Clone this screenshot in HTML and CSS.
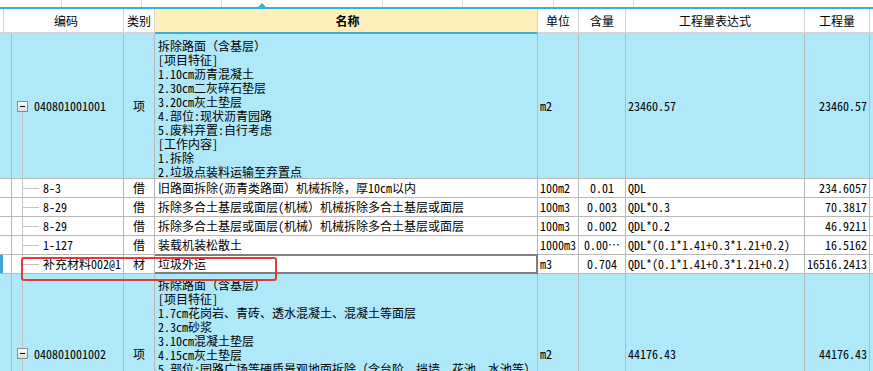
FILE: index.html
```html
<!DOCTYPE html>
<html lang="zh">
<head>
<meta charset="utf-8">
<link rel="stylesheet" href="styles.css">
</head>
<body>
<div class="strip">
  <span class="tick t1"></span><span class="tick t2"></span><span class="tick t3"></span>
  <span class="tick t4"></span><span class="tick t5"></span><span class="tick t6"></span><span class="tick t7"></span>
  <span class="caret"></span>
</div>
<div class="grid">
  <div class="row head">
    <div class="c h code">编码</div>
    <div class="c h">类别</div>
    <div class="c h name">名称</div>
    <div class="c h">单位</div>
    <div class="c h">含量</div>
    <div class="c h">工程量表达式</div>
    <div class="c h">工程量</div>
    <div class="c h end"></div>
  </div>

  <div class="row blue r1">
    <div class="c ind"></div>
    <div class="c code tree-down"><span class="box"></span><span class="ctext">040801001001</span></div>
    <div class="c cat">项</div>
    <div class="c name multi">拆除路面（含基层）<br>[项目特征]<br>1.10cm沥青混凝土<br>2.30cm二灰碎石垫层<br>3.20cm灰土垫层<br>4.部位:现状沥青园路<br>5.废料弃置:自行考虑<br>[工作内容]<br>1.拆除<br>2.垃圾点装料运输至弃置点</div>
    <div class="c unit">m2</div>
    <div class="c qty"></div>
    <div class="c expr">23460.57</div>
    <div class="c amt">23460.57</div>
    <div class="c end"></div>
  </div>

  <div class="row child">
    <div class="c ind"></div>
    <div class="c code tree-line"><span class="branch"></span><span class="ctext">8-3</span></div>
    <div class="c cat">借</div>
    <div class="c name">旧路面拆除(沥青类路面）机械拆除，厚10cm以内</div>
    <div class="c unit">100m2</div>
    <div class="c qty">0.01</div>
    <div class="c expr">QDL</div>
    <div class="c amt">234.6057</div>
    <div class="c end"></div>
  </div>

  <div class="row child">
    <div class="c ind"></div>
    <div class="c code tree-line"><span class="branch"></span><span class="ctext">8-29</span></div>
    <div class="c cat">借</div>
    <div class="c name">拆除多合土基层或面层(机械）机械拆除多合土基层或面层</div>
    <div class="c unit">100m3</div>
    <div class="c qty">0.003</div>
    <div class="c expr">QDL*0.3</div>
    <div class="c amt">70.3817</div>
    <div class="c end"></div>
  </div>

  <div class="row child">
    <div class="c ind"></div>
    <div class="c code tree-line"><span class="branch"></span><span class="ctext">8-29</span></div>
    <div class="c cat">借</div>
    <div class="c name">拆除多合土基层或面层(机械）机械拆除多合土基层或面层</div>
    <div class="c unit">100m3</div>
    <div class="c qty">0.002</div>
    <div class="c expr">QDL*0.2</div>
    <div class="c amt">46.9211</div>
    <div class="c end"></div>
  </div>

  <div class="row child">
    <div class="c ind"></div>
    <div class="c code tree-line"><span class="branch"></span><span class="ctext">1-127</span></div>
    <div class="c cat">借</div>
    <div class="c name">装载机装松散土</div>
    <div class="c unit">1000m3</div>
    <div class="c qty">0.00⋯</div>
    <div class="c expr">QDL*(0.1*1.41+0.3*1.21+0.2)</div>
    <div class="c amt">16.5162</div>
    <div class="c end"></div>
  </div>

  <div class="row child sel">
    <div class="c ind mark"></div>
    <div class="c code tree-line"><span class="branch"></span><span class="ctext">补充材料002@1</span></div>
    <div class="c cat">材</div>
    <div class="c name editing">垃圾外运</div>
    <div class="c unit">m3</div>
    <div class="c qty">0.704</div>
    <div class="c expr">QDL*(0.1*1.41+0.3*1.21+0.2)</div>
    <div class="c amt">16516.2413</div>
    <div class="c end"></div>
    <div class="redbox"></div>
  </div>

  <div class="row blue r2">
    <div class="c ind"></div>
    <div class="c code tree-r2"><span class="box"></span><span class="ctext">040801001002</span></div>
    <div class="c cat">项</div>
    <div class="c name multi">拆除路面（含基层）<br>[项目特征]<br>1.7cm花岗岩、青砖、透水混凝土、混凝土等面层<br>2.3cm砂浆<br>3.10cm混凝土垫层<br>4.15cm灰土垫层<br>5.部位:园路广场等硬质景观地面拆除（含台阶、挡墙、花池、水池等）<br>[工作内容]<br>1.拆除<br>2.垃圾点装料运输至弃置点<br>&nbsp;</div>
    <div class="c unit">m2</div>
    <div class="c qty"></div>
    <div class="c expr">44176.43</div>
    <div class="c amt">44176.43</div>
    <div class="c end"></div>
  </div>
</div>
</body>
</html>
```

FILE: styles.css
```css
* { box-sizing: border-box; }
html, body {
  margin: 0;
  padding: 0;
  width: 873px;
  height: 371px;
  overflow: hidden;
  background: #ffffff;
}
body {
  font-family: "Noto Sans Mono CJK SC", "Noto Sans CJK SC", "Liberation Mono", monospace;
  font-size: 12px;
  color: #000;
}

.strip {
  position: relative;
  height: 9px;
  border-bottom: 2px solid #3aaedc;
  background: #fff;
}
.tick {
  position: absolute;
  top: 0;
  width: 1px;
  height: 7px;
  background: #d9d9d9;
}
.t1 { left: 61px; }
.t2 { left: 141px; }
.t3 { left: 221px; }
.t4 { left: 382px; }
.t5 { left: 462px; }
.t6 { left: 553px; }
.t7 { left: 633px; }
.caret {
  position: absolute;
  left: 258px;
  top: 3px;
  width: 0;
  height: 0;
  border-left: 4px solid transparent;
  border-right: 4px solid transparent;
  border-bottom: 4px solid #3aaedc;
}

.grid { display: flex; flex-direction: column; }

.row {
  position: relative;
  display: grid;
  grid-template-columns: 12px 112px 31px 383px 41px 47px 179px 65px 3px;
  background: #fff;
}
.row.head {
  grid-template-columns: 3px 121px 31px 383px 41px 47px 179px 65px 3px;
  height: 25px;
}
.row.head::before {
  content: "";
  border-bottom: 2px solid #d4d4d4;
}
.c {
  border-right: 1px solid #b9b9b9;
  border-bottom: 1px solid #b9b9b9;
  display: flex;
  align-items: center;
  white-space: nowrap;
  overflow: hidden;
  line-height: 14px;
}
.h {
  justify-content: center;
  border-right: 1px solid #d4d4d4;
  border-bottom: 2px solid #d4d4d4;
  font-size: 12px;
}
.h.code { border-left: 1px solid #d4d4d4; }
.h.name {
  background: #fff0bb;
  border-bottom: 2px solid #3aaedc;
  font-weight: bold;
}
.h.end { border-right: none; }

.blue { background: #aee8f9; }
.r1 { height: 145px; }
.child { height: 19px; }
.r2 { height: 160px; }

.ind { background: transparent; }
.mark { background: linear-gradient(90deg, #3aa6d6 0, #3aa6d6 3px, #ffffff 3px); }

.code { padding-left: 5px; }
.tree-down {
  background-image: linear-gradient(#c4c4c4, #c4c4c4);
  background-size: 1px 50%;
  background-position: 10px 100%;
  background-repeat: no-repeat;
}
.tree-line {
  padding-left: 11px;
  background-image: linear-gradient(#c4c4c4, #c4c4c4);
  background-size: 1px 100%;
  background-position: 10px 0;
  background-repeat: no-repeat;
}
.tree-r2 {
  background-image: linear-gradient(#c4c4c4, #c4c4c4);
  background-size: 1px 100%;
  background-position: 10px 0;
  background-repeat: no-repeat;
}
.box {
  position: relative;
  flex: none;
  width: 11px;
  height: 11px;
  border: 1px solid #8c8c8c;
  background: linear-gradient(#ffffff, #dcdcdc);
  margin-right: 6px;
}
.box::after {
  content: "";
  position: absolute;
  left: 2px;
  top: 4px;
  width: 5px;
  height: 1px;
  background: #000;
}
.branch {
  flex: none;
  width: 16px;
  height: 1px;
  background: #c4c4c4;
  margin-right: 4px;
}
.cat { justify-content: center; }
.name { padding-left: 3px; }
.name.multi {
  align-items: flex-start;
  padding-top: 5px;
  display: block;
}
.r2 .name.multi { padding-top: 4px; }
.unit { padding-left: 2px; }
.qty { justify-content: center; }
.expr { padding-left: 2px; }
.amt { justify-content: flex-end; padding-right: 2px; }
.end { border-right: none; }

.sel { z-index: 2; }
.sel .name.editing {
  background: #fff;
  border-top: 2px solid #7f7f7f;
  border-right: 2px solid #7f7f7f;
  border-bottom: 2px solid #7f7f7f;
  margin-top: -1px;
  padding-left: 3px;
}
.redbox {
  position: absolute;
  left: 21px;
  top: 2px;
  width: 256px;
  height: 24px;
  border: 2px solid #e53935;
  border-radius: 3px;
  pointer-events: none;
  z-index: 3;
}
```
